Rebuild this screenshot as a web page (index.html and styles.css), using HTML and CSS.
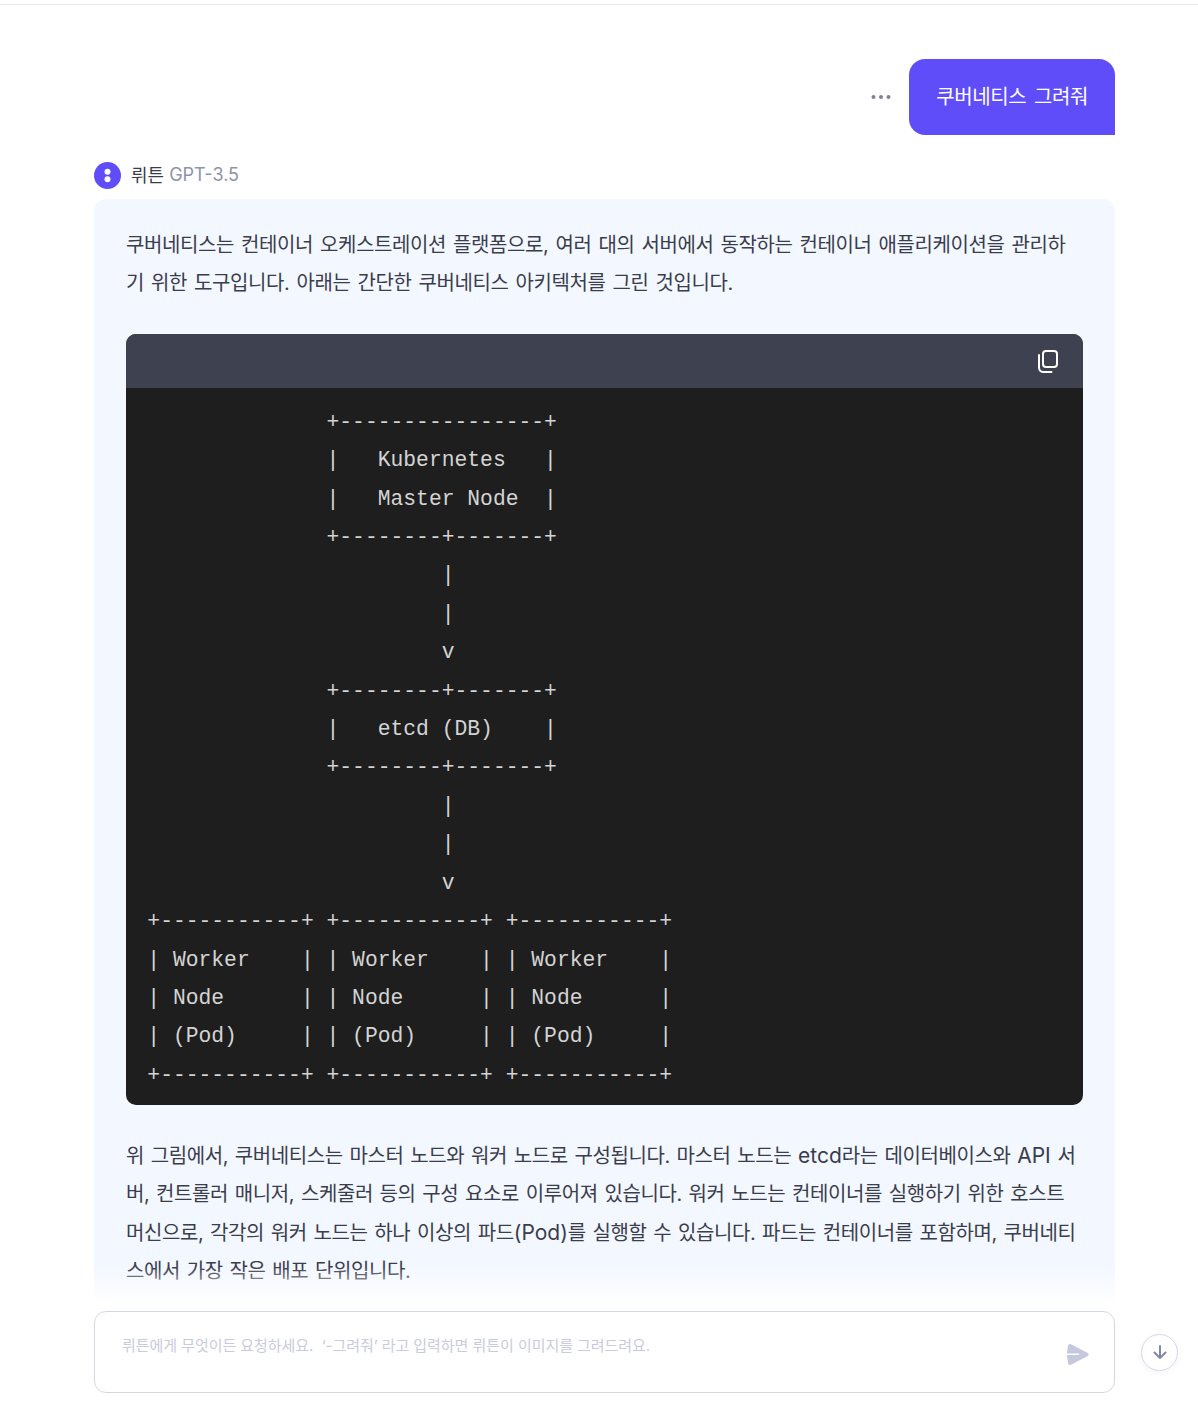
FILE: index.html
```html
<!DOCTYPE html>
<html lang="ko">
<head>
    <meta charset="UTF-8">
    <meta name="viewport" content="width=device-width, initial-scale=1.0">
    <title>뤼튼</title>
    <link rel="stylesheet" href="styles.css">
</head>
<body>

    <div class="topbar"></div>

    <div class="chat">
        <div class="question">
            <svg class="more" width="20" height="4" viewBox="0 0 20 4">
                <circle cx="2.5" cy="2" r="2"/>
                <circle cx="10" cy="2" r="2"/>
                <circle cx="17.5" cy="2" r="2"/>
            </svg>
            <div class="bubble">쿠버네티스 그려줘</div>
        </div>

        <div class="answer-head">
            <svg class="avatar" width="27" height="27" viewBox="0 0 27 27">
                <circle cx="13.5" cy="13.5" r="13.5" fill="#604dfa"/>
                <circle cx="13.5" cy="9.8" r="3" fill="#fff"/>
                <circle cx="13.5" cy="17.2" r="3" fill="#fff"/>
            </svg>
            <span class="name">뤼튼</span>
            <span class="model">GPT-3.5</span>
        </div>

        <div class="answer">
            <p>쿠버네티스는 컨테이너 오케스트레이션 플랫폼으로, 여러 대의 서버에서 동작하는 컨테이너 애플리케이션을 관리하기 위한 도구입니다. 아래는 간단한 쿠버네티스 아키텍처를 그린 것입니다.</p>

            <div class="code">
                <div class="code-head">
                    <svg width="20" height="23" viewBox="0 0 20 23" fill="none" stroke="#fff" stroke-width="2" stroke-linecap="round">
                        <rect x="5" y="1" width="14" height="16" rx="3"/>
                        <path d="M1 5v12.5A4.5 4.5 0 0 0 5.5 22h8"/>
                    </svg>
                </div>
<pre>              +----------------+
              |   Kubernetes   |
              |   Master Node  |
              +--------+-------+
                       |
                       |
                       v
              +--------+-------+
              |   etcd (DB)    |
              +--------+-------+
                       |
                       |
                       v
+-----------+ +-----------+ +-----------+
| Worker    | | Worker    | | Worker    |
| Node      | | Node      | | Node      |
| (Pod)     | | (Pod)     | | (Pod)     |
+-----------+ +-----------+ +-----------+</pre>
            </div>

            <p class="tight">위 그림에서, 쿠버네티스는 마스터 노드와 워커 노드로 구성됩니다. 마스터 노드는 <span class="latin">etcd</span>라는 데이터베이스와 <span class="latin">API</span> 서버, 컨트롤러 매니저, 스케줄러 등의 구성 요소로 이루어져 있습니다. 워커 노드는 컨테이너를 실행하기 위한 호스트 머신으로, 각각의 워커 노드는 하나 이상의 파드<span class="latin">(Pod)</span>를 실행할 수 있습니다. 파드는 컨테이너를 포함하며, 쿠버네티스에서 가장 작은 배포 단위입니다.</p>
        </div>

        <div class="fade"></div>
    </div>

    <div class="composer">
        <div class="input">
            <span class="placeholder">뤼튼에게 무엇이든 요청하세요. &nbsp;‘-그려줘’ 라고 입력하면 뤼튼이 이미지를 그려드려요.</span>
            <svg class="send" width="23" height="23" viewBox="0 0 23 23">
                <path d="M4 3 20.5 11.5 4 20 3 13V10z" fill="#c6c9de" stroke="#c6c9de" stroke-width="4" stroke-linejoin="round"/>
                <path d="M1 11.2H12.5" stroke="#fff" stroke-width="1.4" stroke-linecap="round"/>
            </svg>
        </div>
        <div class="scroll-btn">
            <svg width="16" height="16" viewBox="0 0 16 16" fill="none" stroke="#8688a3" stroke-width="2" stroke-linecap="round" stroke-linejoin="round">
                <path d="M8 2v12M2.5 8.5 8 14l5.5-5.5"/>
            </svg>
        </div>
    </div>

</body>
</html>
```

FILE: styles.css
```css
html, body {
    height: 100%;
}
body {
    margin: 0;
    display: flex;
    flex-direction: column;
    overflow: hidden;
    background-color: #fff;
    color: #3a3d4c;
    font-family: Inter, "Noto Sans CJK KR", sans-serif;
}
.topbar {
    height: 4px;
    flex: none;
    border-bottom: 1px solid #e4e8f5;
}
.chat {
    position: relative;
    flex: 1;
    min-height: 0;
    overflow: hidden;
    padding: 54px 83px 0 94px;
}
.question {
    display: flex;
    justify-content: flex-end;
    align-items: center;
    gap: 18px;
}
.more {
    fill: #7f8296;
}
.bubble {
    padding: 19px 27px;
    border-radius: 16px 16px 0 16px;
    background-color: #604dfa;
    color: #fff;
    font-size: 20px;
    letter-spacing: -0.4px;
    word-spacing: 2.5px;
    line-height: 38px;
}
.answer-head {
    display: flex;
    align-items: center;
    height: 27px;
    margin-top: 27px;
    font-size: 18px;
}
.avatar {
    margin-right: 10px;
}
.name {
    margin-right: 5px;
    padding-bottom: 3px;
}
.model {
    padding-bottom: 2px;
    color: #8e92aa;
}
.answer {
    margin-top: 10px;
    padding: 27px 32px;
    border-radius: 12px 12px 0 0;
    background-color: #f3f7ff;
    font-size: 20px;
    letter-spacing: -0.4px;
    word-spacing: 1.8px;
    line-height: 38.4px;
}
.answer p {
    margin: 0;
}
.answer .tight {
    word-spacing: 1.5px;
}
.latin {
    font-size: 21px;
    line-height: 1;
    letter-spacing: 0;
}
.code {
    margin: 31px 0 32px;
    border-radius: 10px;
    overflow: hidden;
    background-color: #1e1e1e;
    letter-spacing: 0;
    word-spacing: 0;
}
.code-head {
    display: flex;
    justify-content: flex-end;
    align-items: center;
    height: 54px;
    padding-right: 25px;
    background-color: #3e4150;
}
.code-head svg {
    margin-top: 1px;
}
pre {
    margin: 0;
    padding: 15px 21.33px 10.8px;
    color: #d4d4d4;
    font-family: "Liberation Mono", monospace;
    font-size: 21.33px;
    line-height: 38.4px;
}
.fade {
    position: absolute;
    left: 0;
    right: 0;
    bottom: 0;
    height: 44px;
    background: linear-gradient(to bottom, rgba(255, 255, 255, 0), #fff 80%);
}
.composer {
    flex: none;
    display: flex;
    align-items: center;
    gap: 26px;
    padding: 0 20px 13px 94px;
}
.input {
    flex: none;
    box-sizing: border-box;
    display: flex;
    justify-content: space-between;
    width: 1021px;
    height: 82px;
    padding: 23px 25px 0 27px;
    border: 1px solid #d3d7ea;
    border-radius: 12px;
}
.placeholder {
    color: #c9cbdc;
    font-size: 15px;
    letter-spacing: -0.05px;
    line-height: 22px;
}
.send {
    margin-top: 8px;
}
.scroll-btn {
    box-sizing: border-box;
    display: flex;
    justify-content: center;
    align-items: center;
    width: 37px;
    height: 37px;
    border: 1px solid #d3d7ea;
    border-radius: 50%;
    box-shadow: 0 2px 6px rgba(60, 70, 120, 0.06);
}
```
